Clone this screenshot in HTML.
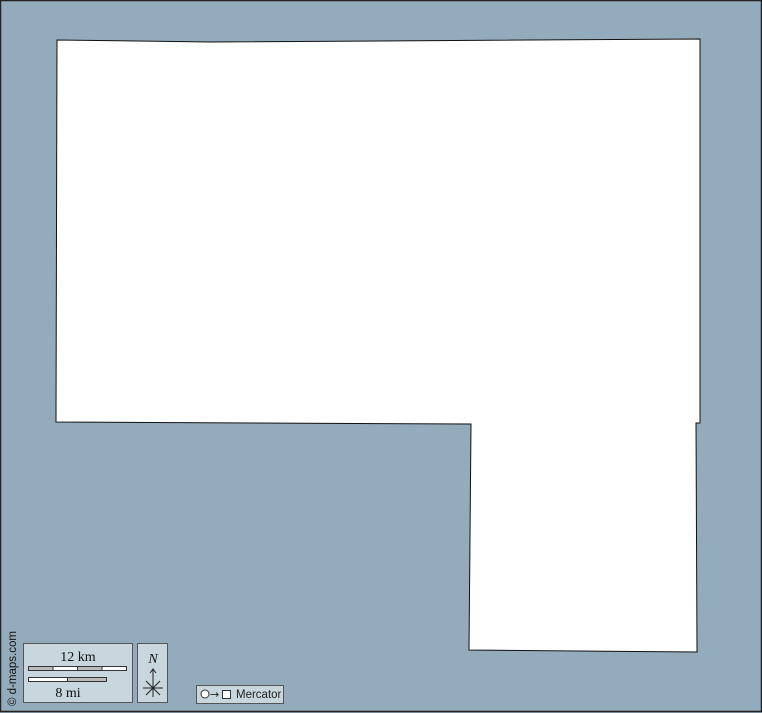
<!DOCTYPE html>
<html><head><style>
html,body{margin:0;padding:0;width:762px;height:713px;overflow:hidden;background:#94abbb}
</style></head><body>
<svg width="762" height="713" viewBox="0 0 762 713" xmlns="http://www.w3.org/2000/svg" style="position:absolute;left:0;top:0">
<rect x="0.5" y="0.5" width="761" height="711" fill="#94abbb" stroke="#222" stroke-width="1.5"/>
<polygon points="57,40 210,42 700,39 700,423 696,423 697,652 469,650 471,424 56,422" fill="#fff" stroke="#111" stroke-width="1"/>
<rect x="23.5" y="643.5" width="109" height="59" fill="#c8d6de" stroke="#555"/>
<text x="78" y="661" font-family="Liberation Serif,serif" font-size="14" text-anchor="middle" fill="#111">12 km</text>
<rect x="28.5" y="666.5" width="98" height="4" fill="#fff" stroke="#333" stroke-width="1"/>
<rect x="28.5" y="666.5" width="24.5" height="4" fill="#bbb" stroke="#333" stroke-width="1"/>
<rect x="77.5" y="666.5" width="24.5" height="4" fill="#bbb" stroke="#333" stroke-width="1"/>
<rect x="28.5" y="677.5" width="78" height="4" fill="#fff" stroke="#333" stroke-width="1"/>
<rect x="67.5" y="677.5" width="39" height="4" fill="#bbb" stroke="#333" stroke-width="1"/>
<text x="68" y="697" font-family="Liberation Serif,serif" font-size="14" text-anchor="middle" fill="#111">8 mi</text>
<rect x="137.5" y="643.5" width="30" height="59" fill="#c8d6de" stroke="#555"/>
<text x="153" y="663" font-family="Liberation Serif,serif" font-style="italic" font-size="14" text-anchor="middle" fill="#111">N</text>
<path d="M153,670V697M143,688H163M146,681L160,695M160,681L146,695M150,673L153,669L156,673" stroke="#222" stroke-width="1" fill="none"/>
<rect x="196.5" y="685.5" width="87" height="18" fill="#c8d6de" stroke="#555"/>
<circle cx="205" cy="694" r="4" fill="#fff" stroke="#333"/>
<text x="210" y="698" font-family="DejaVu Sans,sans-serif" font-size="11" fill="#222">→</text>
<rect x="222.5" y="690.5" width="8" height="8" fill="#fff" stroke="#333"/>
<text x="236" y="698" font-family="Liberation Sans,sans-serif" font-size="11.5" fill="#222">Mercator</text>
<text transform="translate(16,706) rotate(-90)" font-family="Liberation Sans,sans-serif" font-size="11.5" fill="#111">© d-maps.com</text>
</svg>
</body></html>
